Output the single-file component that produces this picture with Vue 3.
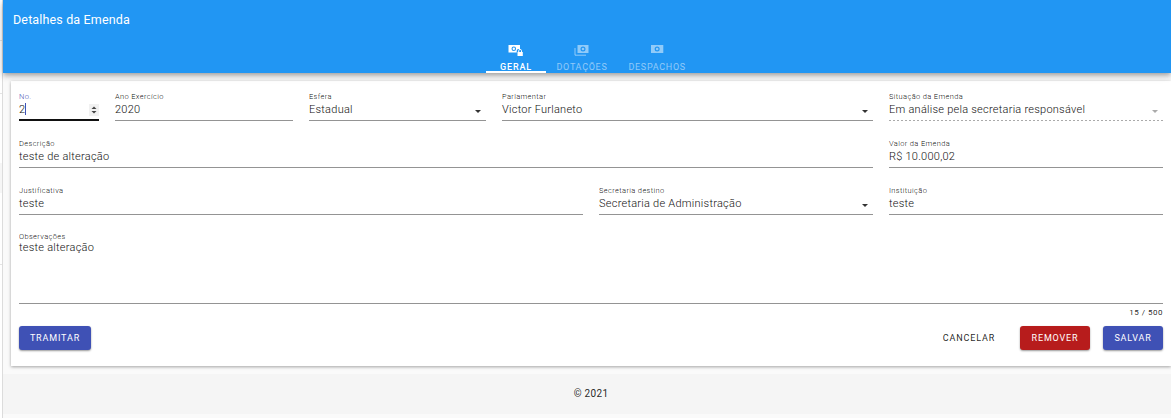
<script setup>
const rows = [
  { cls: 'r1', fields: [
    { label: 'No.', value: '2', w: 80, focus: true },
    { label: 'Ano Exercício', value: '2020', w: 178 },
    { label: 'Esfera', value: 'Estadual', w: 177, select: true },
    { label: 'Parlamentar', value: 'Victor Furlaneto', w: 371, select: true },
    { label: 'Situação da Emenda', value: 'Em análise pela secretaria responsável', w: 274, select: true, disabled: true }
  ] },
  { cls: 'r2', fields: [
    { label: 'Descrição', value: 'teste de alteração', w: 854 },
    { label: 'Valor da Emenda', value: 'R$ 10.000,02', w: 274 }
  ] },
  { cls: 'r3', fields: [
    { label: 'Justificativa', value: 'teste', w: 564 },
    { label: 'Secretaria destino', value: 'Secretaria de Administração', w: 274, select: true },
    { label: 'Instituição', value: 'teste', w: 274 }
  ] }
]
</script>

<template>
  <div class="shell">
    <div class="page">
      <header class="top">
        <div class="title">Detalhes da Emenda</div>
        <nav class="tabs">
          <div class="tab active">
            <svg width="16" height="11" viewBox="0 0 16 11"><path fill="currentColor" fill-rule="evenodd" d="M0.500 0H12v4H10.500A1.800 1.800 0 0 0 8.700 5.800V7.500H0.500zM5.800 1.500a2.300 2.300 0 1 0 0 4.600 2.300 2.300 0 0 0 0-4.600z"/><circle cx="5.800" cy="3.800" r="1.200" fill="currentColor"/><path fill="currentColor" d="M9.500 7h5.300v4H9.500z"/><path fill="none" stroke="currentColor" d="M10.700 7V5.800a1.400 1.400 0 0 1 2.800 0V7"/></svg>
            <span>GERAL</span>
          </div>
          <div class="tab">
            <svg width="16" height="11" viewBox="0 0 16 11"><path fill="currentColor" fill-rule="evenodd" d="M3.500 0H14.500V8H3.500zM9 1.500a2.500 2.500 0 1 0 0 5 2.500 2.500 0 0 0 0-5z"/><circle cx="9" cy="4" r="1.300" fill="currentColor"/><path fill="none" stroke="currentColor" d="M1 3v7.200h11"/></svg>
            <span>DOTAÇÕES</span>
          </div>
          <div class="tab">
            <svg width="16" height="11" viewBox="0 0 16 11"><path fill="currentColor" fill-rule="evenodd" d="M2 0H14.300V8H2zM8.150 1.500a2.500 2.500 0 1 0 0 5 2.500 2.500 0 0 0 0-5z"/><circle cx="8.150" cy="4" r="1.300" fill="currentColor"/></svg>
            <span>DESPACHOS</span>
          </div>
        </nav>
      </header>

      <main class="card">
        <div v-for="row in rows" :key="row.cls" class="row" :class="row.cls">
          <div
            v-for="f in row.fields"
            :key="f.label"
            class="field"
            :class="{ focus: f.focus, disabled: f.disabled }"
            :style="{ width: f.w + 'px' }"
          >
            <div class="label">{{ f.label }}</div>
            <div class="value">
              <span>{{ f.value }}<i v-if="f.focus" class="caret"></i></span>
              <b v-if="f.select" class="arrow"></b>
              <span v-if="f.focus" class="spin">
                <svg width="10" height="12" viewBox="0 0 10 12"><path fill="#444" d="M5 2.500 7.500 5h-5zM5 9.500 2.500 7h5z"/></svg>
              </span>
            </div>
          </div>
        </div>

        <div class="obs">
          <div class="label">Observações</div>
          <div class="area">teste alteração</div>
        </div>
        <div class="count">15 / 500</div>

        <div class="actions">
          <button class="btn indigo tram">TRAMITAR</button>
          <span class="spacer"></span>
          <button class="btn flat">CANCELAR</button>
          <button class="btn red">REMOVER</button>
          <button class="btn indigo save">SALVAR</button>
        </div>
      </main>

      <footer class="foot">© 2021</footer>
    </div>
  </div>
</template>

<style>
html, body { margin: 0; background: #fff; }
</style>

<style scoped>
.shell {
  width: 1171px;
  height: 418px;
  overflow: hidden;
  padding-left: 2px;
  box-sizing: border-box;
  background:
    linear-gradient(#e4e4e4, #e4e4e4) 0 40px / 2px 1px no-repeat,
    linear-gradient(#e4e4e4, #e4e4e4) 0 93px / 2px 1px no-repeat,
    linear-gradient(#f6f6f6, #f6f6f6) 0 163px / 2px 30px no-repeat,
    linear-gradient(#e4e4e4, #e4e4e4) 0 264px / 2px 1px no-repeat,
    #fff;
}
.page {
  height: 418px;
  box-sizing: border-box;
  background: #fafafa;
  font-family: Roboto, "Liberation Sans", sans-serif;
  color: rgba(0, 0, 0, 0.87);
  border-left: 1px solid #dcdcdc;
}
.top {
  height: 73px;
  background: #2196f3;
  color: #fff;
  box-shadow: 0 2px 4px -1px rgba(0,0,0,.2), 0 4px 5px 0 rgba(0,0,0,.14), 0 1px 10px 0 rgba(0,0,0,.12);
  position: relative;
  display: flex;
  flex-direction: column;
}
.title {
  font-size: 12.500px;
  letter-spacing: 0.15px;
  line-height: 15px;
  padding: 12px 0 0 10px;
  height: 30px;
  flex: none;
  box-sizing: content-box;
}
.tabs {
  display: flex;
  justify-content: flex-start;
  padding-left: 483px;
  margin-top: 3px;
}
.tab {
  min-width: 60px;
  padding: 0 10.500px;
  height: 28px;
  box-sizing: border-box;
  display: flex;
  flex-direction: column;
  align-items: center;
  font-size: 9px;
  font-weight: 400;
  letter-spacing: 0.700px;
  color: rgba(255,255,255,.5);
}
.tab svg { margin-bottom: 7px; flex: none; }
.tab span { line-height: 8px; white-space: nowrap; }
.tab.active { color: #fff; border-bottom: 2px solid #fff; font-weight: 500; letter-spacing: 0.900px; }
.card {
  margin: 8px 0 0 8px;
  height: 285px;
  box-sizing: border-box;
  background: #fff;
  box-shadow: 0 1px 3px rgba(0,0,0,.35);
  padding: 11px 8px 0 8px;
  display: flex;
  flex-direction: column;
}
.row { display: flex; gap: 16px; height: 47px; flex: none; }
.field { display: flex; flex-direction: column; height: 28px; border-bottom: 1px solid #949494; box-sizing: content-box; }
.label {
  font-size: 7.500px;
  font-weight: 300;
  line-height: 9px;
  letter-spacing: 0.35px;
  color: rgba(0,0,0,.95);
  height: 9px;
}
.value {
  font-size: 11px;
  font-weight: 300;
  letter-spacing: 0.25px;
  line-height: 15px;
  padding-top: 1px;
  display: flex;
  justify-content: space-between;
  align-items: center;
  color: #111;
}
.caret { display: inline-block; width: 1px; height: 12px; background: #3f51b5; vertical-align: -2px; }
.arrow {
  width: 0; height: 0;
  margin-right: 5px;
  border-left: 3px solid transparent;
  border-right: 3px solid transparent;
  border-top: 3px solid #333;
  margin-top: 3px;
}
.spin { background: #f1f1f1; width: 10px; height: 12px; display: flex; }
.focus { border-bottom: 2px solid #111; height: 27px; }
.focus .label { color: #3f51b5; }
.disabled { border-bottom: 0; background: repeating-linear-gradient(90deg, #aaa 0 2px, transparent 2px 4px) bottom / 100% 1px no-repeat; height: 29px; }
.disabled .arrow { border-top-color: #aaa; }
.obs { height: 71px; margin-top: -1px; flex: none; border-bottom: 1px solid #949494; }
.area { font-size: 11px; font-weight: 300; letter-spacing: 0.25px; line-height: 15px; margin-top: -1px; color: #111; }
.count { text-align: right; font-size: 8px; letter-spacing: 0.5px; line-height: 10px; margin-top: 4px; }
.actions { display: flex; align-items: center; margin-top: 8px; gap: 13px; }
.spacer { flex: 1; }
.btn {
  height: 24px;
  border: 0;
  border-radius: 3px;
  font-family: inherit;
  font-size: 9px;
  font-weight: 400;
  letter-spacing: 0.850px;
  color: #fff;
  padding: 0;
  box-shadow: 0 1px 2px rgba(0,0,0,.4);
}
.indigo { background: #3f51b5; }
.red { background: #b71c1c; width: 70px; }
.tram { width: 72px; }
.save { width: 60px; }
.flat { background: none; box-shadow: none; color: rgba(0,0,0,.87); width: 70px; margin-right: 3px; }
.foot {
  margin-top: 8px;
  height: 40px;
  background: #f5f5f5;
  font-size: 10px;
  letter-spacing: 0.3px;
  padding: 0 0 2px 8px;
  box-sizing: border-box;
  display: flex;
  align-items: center;
  justify-content: center;
}
</style>
